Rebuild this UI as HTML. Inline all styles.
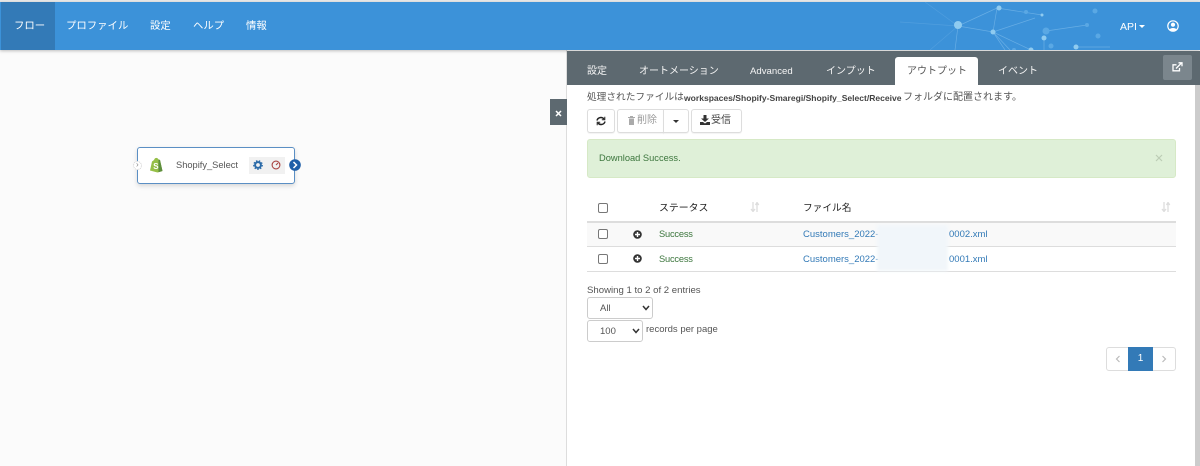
<!DOCTYPE html>
<html lang="ja"><head><meta charset="utf-8"><title>Flow</title>
<style>
*{box-sizing:border-box}
html,body{margin:0;padding:0;width:1200px;height:466px;overflow:hidden;background:#fff;font-family:"Liberation Sans","Noto Sans CJK JP",sans-serif;font-size:10px;color:#555}
.a{position:absolute;white-space:nowrap}
#hd{left:0;top:2px;width:1200px;height:48px;background:#3c92d9;box-shadow:0 1px 3px rgba(0,0,0,.25)}
.nav{top:20px;font-size:10.4px;color:#fff;line-height:14px}
#tabs{left:567px;top:51px;width:633px;height:34px;background:#5d6970}
.tab{top:65px;font-size:10px;line-height:14px;color:#f4f4f4}
.btn{border:1px solid #ddd;border-radius:3px;background:#fff;height:24px;top:109px;box-shadow:0 1px 1px rgba(0,0,0,.05)}
.cb{width:10px;height:10px;border:1px solid #777;border-radius:2px;left:598px;background:#fff}
.line{left:587px;width:589px;height:1px;background:#ddd}
.sel{border:1px solid #ccc;border-radius:3px;background:#fff;height:22px;font-size:9.5px;line-height:22px;color:#555;padding-left:12px}
.t{font-size:9.5px;line-height:13px}
</style></head><body>
<div class="a" style="left:0;top:0;width:1200px;height:2px;background:#e8e8e8"></div>
<div class="a" style="left:0;top:50px;width:567px;height:416px;background:#fbfbfb"></div>
<div class="a" style="left:566px;top:50px;width:1px;height:416px;background:#ddd"></div>
<div class="a" id="hd"></div>
<div class="a" style="left:1px;top:2px;width:54px;height:48px;background:#337ab7"></div>
<svg class="a" style="left:900px;top:2px" width="230" height="48" viewBox="900 2 230 48" fill="none" stroke="#8cc4ee" stroke-width=".7">
<path opacity=".55" d="M958 26L997 8L1042 15M958 26L993 32L997 8M958 26L955 50M993 32L1035 18M993 32L1031 50M993 32L1010 50M993 32L1005 50M1046 31L1087 25M1044 38V50M1076 47L1110 47"/>
<path opacity=".25" d="M925 2L958 26M930 50L958 26M900 22L958 26"/>
<g stroke="none" fill="#8fcbf0"><circle cx="958" cy="25" r="4"/><circle cx="999" cy="8" r="2.500"/><circle cx="993" cy="32" r="2.500"/><circle cx="1044" cy="38" r="2.500"/><circle cx="1031" cy="50" r="2.500"/><circle cx="1076" cy="47" r="2.500"/><circle cx="1042" cy="15" r="1.500"/></g>
<g stroke="none" fill="#5aa8e4"><circle cx="1046" cy="31" r="3.500"/><circle cx="1051" cy="46" r="2.500"/><circle cx="1026" cy="12" r="2"/><circle cx="1095" cy="11" r="2.500"/><circle cx="1087" cy="25" r="2"/><circle cx="1098" cy="36" r="2.500"/><circle cx="1136" cy="45" r="3.500" opacity=".5"/><circle cx="1014" cy="50" r="2"/></g>
</svg>
<div class="a nav" style="left:14px">フロー</div>
<div class="a nav" style="left:66px">プロファイル</div>
<div class="a nav" style="left:150px">設定</div>
<div class="a nav" style="left:193px">ヘルプ</div>
<div class="a nav" style="left:246px">情報</div>
<div class="a nav" style="left:1120px;font-size:10.5px">API</div>
<div class="a" style="left:1139px;top:25px;border:3.500px solid transparent;border-top:3.500px solid #fff;border-bottom:0;width:0;height:0"></div>
<svg class="a" style="left:1167px;top:20px" width="12" height="12" viewBox="0 0 12 12"><circle cx="6" cy="6" r="5.200" fill="none" stroke="#fff" stroke-width="1.200"/><circle cx="6" cy="4.700" r="2.100" fill="#fff"/><path d="M2.500 9.500C3.500 7.500 8.500 7.500 9.500 9.500L6 11.300Z" fill="#fff"/></svg>

<!-- node -->
<div class="a" style="left:137px;top:147px;width:158px;height:37px;background:#fff;border:1px solid #5b8fc4;border-radius:3px;box-shadow:0 2px 5px rgba(0,0,0,.15)"></div>
<div class="a" style="left:133px;top:161px;width:9px;height:9px;border:1px dotted #ccc;border-radius:50%;background:#fff"></div>
<div class="a" style="left:136px;top:160px;font-size:8px;color:#888;line-height:10px">›</div>
<svg class="a" style="left:149px;top:157px" width="14" height="16" viewBox="0 0 14 16"><path d="M1 13.500L3 4.500C4 3.800 5 3.500 5.500 2C6.500.5 8.500.5 9.500 2.500L11 3L13.500 14L8.500 15.500Z" fill="#95bf47"/><path d="M9.500 2.500L11 3L13.500 14L9.500 15.300Z" fill="#5e8e3e"/><text x="4.300" y="12" font-size="8" font-weight="bold" fill="#fff" font-family="Liberation Sans">S</text></svg>
<div class="a" style="left:176px;top:159px;font-size:9.300px;line-height:13px;color:#555">Shopify_Select</div>
<div class="a" style="left:249px;top:157px;width:36px;height:17px;background:#f1f1f1"></div>
<svg class="a" style="left:253px;top:160px" width="10" height="10" viewBox="0 0 10 10"><circle cx="5" cy="5" r="2.900" fill="none" stroke="#2a6aa8" stroke-width="2"/><circle cx="5" cy="5" r="4.300" fill="none" stroke="#2a6aa8" stroke-width="1.200" stroke-dasharray="1.500 1.500"/></svg>
<svg class="a" style="left:271px;top:160px" width="10" height="10" viewBox="0 0 10 10"><circle cx="5" cy="5" r="3.900" fill="none" stroke="#a94442" stroke-width="1.100"/><path d="M5 5L7 3" stroke="#a94442" stroke-width="1.100"/></svg>
<svg class="a" style="left:289px;top:159px" width="12" height="12" viewBox="0 0 12 12"><circle cx="6" cy="6" r="5.800" fill="#1f5fa8"/><path d="M4.500 3L7.500 6L4.500 9" fill="none" stroke="#fff" stroke-width="1.500"/></svg>

<div class="a" style="left:550px;top:99px;width:17px;height:26px;background:#5d6970"></div>
<svg class="a" style="left:555px;top:110px" width="7" height="7" viewBox="0 0 7 7"><path d="M1 1L6 6M6 1L1 6" stroke="#fff" stroke-width="1.500"/></svg>

<!-- tabs -->
<div class="a" id="tabs"></div>
<div class="a" style="left:1195px;top:85px;width:5px;height:381px;background:#ccc"></div>
<div class="a tab" style="left:587px">設定</div>
<div class="a tab" style="left:639px">オートメーション</div>
<div class="a tab" style="left:750px;font-size:9.600px">Advanced</div>
<div class="a tab" style="left:826px">インプット</div>
<div class="a" style="left:895px;top:57px;width:83px;height:28px;background:#fff;border-radius:3px 3px 0 0"></div>
<div class="a tab" style="left:907px;color:#555">アウトプット</div>
<div class="a tab" style="left:998px">イベント</div>
<div class="a" style="left:1163px;top:55px;width:29px;height:25px;background:#7b868d;border-radius:2px"></div>
<svg class="a" style="left:1172px;top:62px" width="11" height="10" viewBox="0 0 11 10" fill="none" stroke="#fff" stroke-width="1.300"><path d="M7.500 6V8.800H1V2.800H4.500"/><path d="M4 6.500L9.500 1M6.500 .8H10V4.300"/></svg>

<div class="a" style="left:587px;top:91px;font-size:9.700px;line-height:14px;color:#555">処理されたファイルは</div>
<div class="a" style="left:684px;top:91px;font-size:8.550px;line-height:14px;color:#444;font-weight:bold">workspaces/Shopify-Smaregi/Shopify_Select/Receive</div>
<div class="a" style="left:903px;top:91px;font-size:10px;line-height:14px;color:#555">フォルダに配置されます。</div>

<div class="a btn" style="left:587px;width:28px"></div>
<svg class="a" style="left:596px;top:116px" width="10" height="10" viewBox="0 0 10 10" fill="none" stroke="#222" stroke-width="1.500"><path d="M1 4.500A4 4 0 0 1 8 3M9 5.500A4 4 0 0 1 2 7"/><path d="M8.800 .8V3.800H5.800M1.200 9.200V6.200H4.200" stroke-width="1"/></svg>
<div class="a btn" style="left:617px;width:47px;border-radius:3px 0 0 3px"></div>
<svg class="a" style="left:628px;top:116px" width="7" height="9" viewBox="0 0 7 9"><path d="M0 1.500H7M2.500 1.500V.5H4.500V1.500" fill="none" stroke="#aaa"/><path d="M1 2.500H6V9H1Z" fill="#aaa"/></svg>
<div class="a" style="left:637px;top:114px;font-size:10px;line-height:14px;color:#999">削除</div>
<div class="a btn" style="left:663px;width:26px;border-radius:0 3px 3px 0"></div>
<div class="a" style="left:673px;top:120px;border:3px solid transparent;border-top:3px solid #333;border-bottom:0;width:0;height:0"></div>
<div class="a btn" style="left:691px;width:51px"></div>
<svg class="a" style="left:700px;top:115px" width="10" height="10" viewBox="0 0 10 10"><path d="M3.500 0H6.500V3.500H9L5 7L1 3.500H3.500Z" fill="#333"/><path d="M0 7H3L5 8.500L7 7H10V10H0Z" fill="#333"/></svg>
<div class="a" style="left:711px;top:114px;font-size:10px;line-height:14px;color:#444">受信</div>

<div class="a" style="left:587px;top:139px;width:589px;height:39px;background:#dff0d8;border:1px solid #d6e9c6;border-radius:3px"></div>
<div class="a t" style="left:599px;top:152px;font-size:9.300px;color:#3c763d">Download Success.</div>
<svg class="a" style="left:1155px;top:154px" width="8" height="8" viewBox="0 0 8 8"><path d="M1 1L7 7M7 1L1 7" stroke="#bccdb5" stroke-width="1.200"/></svg>

<!-- table -->
<div class="a cb" style="top:203px"></div>
<div class="a" style="left:659px;top:201px;font-size:9.900px;line-height:15px;color:#222">ステータス</div>
<svg class="a" style="left:750px;top:202px" width="10" height="10" viewBox="0 0 10 10" fill="none" stroke="#ddd" stroke-width="1.300"><path d="M3 0V9M1 7L3 9.500L5 7M7 10V1M5.500 3L7 .5L8.800 3"/></svg>
<div class="a" style="left:803px;top:201px;font-size:9.700px;line-height:15px;color:#222">ファイル名</div>
<svg class="a" style="left:1161px;top:202px" width="10" height="10" viewBox="0 0 10 10" fill="none" stroke="#ddd" stroke-width="1.300"><path d="M3 0V9M1 7L3 9.500L5 7M7 10V1M5.500 3L7 .5L8.800 3"/></svg>
<div class="a line" style="top:221px;height:2px"></div>
<div class="a" style="left:587px;top:223px;width:589px;height:23px;background:#f9f9f9"></div>
<div class="a line" style="top:246px"></div>
<div class="a line" style="top:271px"></div>
<div class="a cb" style="top:229px"></div>
<div class="a cb" style="top:254px"></div>
<svg class="a" style="left:633px;top:230px" width="9" height="9" viewBox="0 0 9 9"><circle cx="4.500" cy="4.500" r="4.300" fill="#333"/><path d="M2 4.500H7M4.500 2V7" stroke="#fff" stroke-width="1.400"/></svg>
<svg class="a" style="left:633px;top:254px" width="9" height="9" viewBox="0 0 9 9"><circle cx="4.500" cy="4.500" r="4.300" fill="#333"/><path d="M2 4.500H7M4.500 2V7" stroke="#fff" stroke-width="1.400"/></svg>
<div class="a t" style="left:659px;top:228px;font-size:9.300px;letter-spacing:-.2px;color:#3c763d">Success</div>
<div class="a t" style="left:659px;top:253px;font-size:9.300px;letter-spacing:-.2px;color:#3c763d">Success</div>
<div class="a t" style="left:803px;top:228px;color:#337ab7">Customers_2022-</div>
<div class="a t" style="left:803px;top:253px;color:#337ab7">Customers_2022-</div>
<div class="a" style="left:877px;top:225px;width:71px;height:46px;background:#f1f6fa;filter:blur(1.500px)"></div>
<div class="a t" style="left:949px;top:228px;color:#337ab7">0002.xml</div>
<div class="a t" style="left:949px;top:253px;color:#337ab7">0001.xml</div>

<div class="a t" style="left:587px;top:284px;color:#555;font-size:9.600px">Showing 1 to 2 of 2 entries</div>
<div class="a sel" style="left:587px;top:297px;width:66px">All</div>
<svg class="a" style="left:642px;top:305px" width="8" height="6" viewBox="0 0 8 6"><path d="M1 1L4 4.500L7 1" fill="none" stroke="#333" stroke-width="1.500"/></svg>
<div class="a sel" style="left:587px;top:320px;width:56px">100</div>
<svg class="a" style="left:632px;top:328px" width="8" height="6" viewBox="0 0 8 6"><path d="M1 1L4 4.500L7 1" fill="none" stroke="#333" stroke-width="1.500"/></svg>
<div class="a t" style="left:646px;top:323px;color:#555">records per page</div>

<div class="a" style="left:1106px;top:347px;width:70px;height:24px;border:1px solid #ddd;border-radius:3px;background:#fff"></div>
<div class="a" style="left:1128px;top:347px;width:25px;height:24px;background:#337ab7;color:#fff;font-size:10px;line-height:24px;text-align:center">1</div>
<svg class="a" style="left:1115px;top:355px" width="6" height="8" viewBox="0 0 6 8"><path d="M4.500 1L1.500 4L4.500 7" fill="none" stroke="#bbb" stroke-width="1.200"/></svg>
<svg class="a" style="left:1161px;top:355px" width="6" height="8" viewBox="0 0 6 8"><path d="M1.500 1L4.500 4L1.500 7" fill="none" stroke="#bbb" stroke-width="1.200"/></svg>
</body></html>
